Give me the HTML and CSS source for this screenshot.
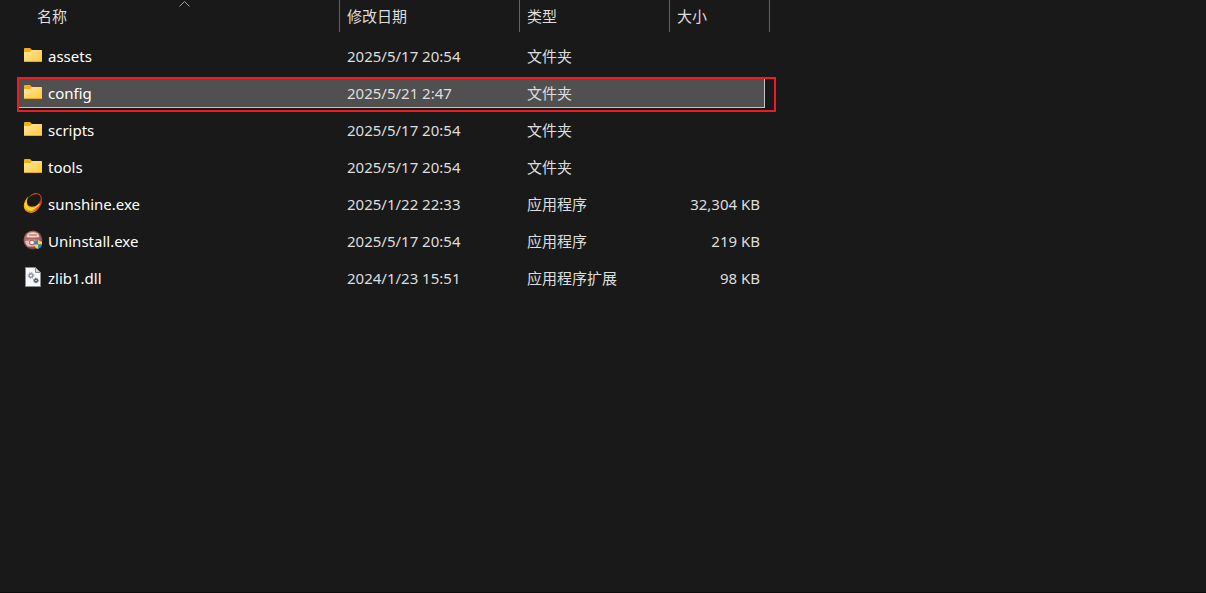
FILE: index.html
```
<!DOCTYPE html>
<html lang="zh-CN">
<head>
    <meta charset="UTF-8">
    <meta name="viewport" content="width=device-width, initial-scale=1.0">
    <title>Sunshine</title>
    <link rel="stylesheet" href="styles.css">
</head>
<body>
    <svg class="sprite" aria-hidden="true">
        <defs>
            <linearGradient id="folder-front" x1="0" y1="0" x2="1" y2="1">
                <stop offset="0" stop-color="#ffe8a0"/>
                <stop offset="1" stop-color="#ffc938"/>
            </linearGradient>
            <linearGradient id="ring" x1="0" y1="0" x2="1" y2="0">
                <stop offset="0" stop-color="#ffae00"/>
                <stop offset="0.45" stop-color="#ffc61a"/>
                <stop offset="0.7" stop-color="#f56a10"/>
                <stop offset="1" stop-color="#b52a12"/>
            </linearGradient>
            <radialGradient id="disc" cx="0.45" cy="0.45" r="0.55">
                <stop offset="0" stop-color="#e3b3a2"/>
                <stop offset="0.6" stop-color="#bb786f"/>
                <stop offset="1" stop-color="#5b3a36"/>
            </radialGradient>
            <symbol id="icon-folder" viewBox="0 0 20 20">
                <path fill="#f5ae14" d="M1 4a1 1 0 0 1 1-1h5l2 2h9a1 1 0 0 1 1 1v10H1z"/>
                <path fill="url(#folder-front)" d="M1 7h6l2-2h9a1 1 0 0 1 1 1v10a1 1 0 0 1-1 1H2a1 1 0 0 1-1-1z"/>
                <path fill="#e9a91d" d="M1 16h18a1 1 0 0 1-1 1H2a1 1 0 0 1-1-1z"/>
            </symbol>
            <symbol id="icon-sunshine" viewBox="0 0 20 20">
                <path fill="url(#ring)" fill-rule="evenodd" d="M13 .3C17 .2 19.400 3 19 7.500C18.500 13.500 13.500 19.700 8 19.700C3.500 19.700 .7 17 .8 12.500C.9 9 3 5.500 5.500 3.500C4 6 3.500 9 4.500 11.500C6 14.500 11 14.500 14.500 11.500C18 8.500 19.200 3.500 15.500 1.600C13 .4 9 1.400 6 4C8 1.600 10.500 .4 13 .3z"/>
                <path fill="none" stroke="#b23314" stroke-width=".8" d="M5 5C8 1.500 13 0 16 1.700C19 3.500 19 7 17.500 10"/>
                <path fill="none" stroke="#ffe25a" stroke-width="1.200" d="M2.500 10C2 14 5 16.500 8.500 16C12 15.500 15 13 16.500 11"/>
                <path fill="none" stroke="#e2500c" stroke-width="1" d="M2.500 16.500C5 19.500 9 19.500 12 17.500C15 15.500 17.500 12 18.500 9"/>
            </symbol>
            <symbol id="icon-uninstall" viewBox="0 0 20 20">
                <circle cx="10" cy="10" r="9.500" fill="url(#disc)"/>
                <path fill="#ecd3c8" d="M5 3.500Q10 1 15 3.500L16.500 7h-13z"/>
                <path fill="#c5524e" d="M6 4.500h8v1H6z"/>
                <path fill="#a8646a" d="M1.500 8h17l.3 1.500H1.200z"/>
                <path fill="#dfc0bb" d="M2 11h9v5.500H4.500Q2.500 14 2 11z"/>
                <circle cx="9" cy="12.500" r="2.400" fill="#fff" stroke="#c4383a" stroke-width="1"/>
                <path fill="#2a86dc" d="M11 11.500q2-.2 4-1.500v4.500h-4z"/>
                <path fill="#ffd331" d="M15 10q2 1.300 4 1.500v3h-4z"/>
                <path fill="#ffd331" d="M11 14.500h4V19q-3.500-1.300-4-4.500z"/>
                <path fill="#2a86dc" d="M15 14.500h4q-.5 3.200-4 4.500z"/>
            </symbol>
            <symbol id="icon-dll" viewBox="0 0 20 20">
                <path fill="#f8f8f8" stroke="#8c8c8c" stroke-width="1" d="M2.500.5h10l5 5v14h-15z"/>
                <path fill="#d6d6d6" stroke="#8c8c8c" stroke-width="1" d="M12.500.5v5h5z"/>
                <circle cx="8" cy="8.500" r="1.800" fill="none" stroke="#8d99a5" stroke-width="1.400"/>
                <circle cx="8" cy="8.500" r="2.900" fill="none" stroke="#8d99a5" stroke-width="1" stroke-dasharray="1.200 1.078"/>
                <circle cx="13" cy="13.500" r="1.400" fill="none" stroke="#3f4d5b" stroke-width="1.200"/>
                <circle cx="13" cy="13.500" r="2.300" fill="none" stroke="#3f4d5b" stroke-width="1" stroke-dasharray="1 .806"/>
            </symbol>
        </defs>
    </svg>

    <main class="explorer">
        <table class="file-table">
            <colgroup>
                <col class="col-name">
                <col class="col-date">
                <col class="col-type">
                <col class="col-size">
            </colgroup>
            <thead>
                <tr>
                    <th aria-sort="ascending">
                        <button class="column-header column-header-name" type="button">名称
                            <svg class="sort-arrow" viewBox="0 0 11 6" aria-hidden="true"><path d="M.5 5.500l5-5 5 5"/></svg>
                        </button>
                    </th>
                    <th><button class="column-header" type="button">修改日期</button></th>
                    <th><button class="column-header" type="button">类型</button></th>
                    <th><button class="column-header" type="button">大小</button></th>
                </tr>
            </thead>
            <tbody>
                <tr>
                    <td><div class="file-name"><svg class="file-icon"><use href="#icon-folder"/></svg>assets</div></td>
                    <td>2025/5/17 20:54</td>
                    <td>文件夹</td>
                    <td class="file-size"></td>
                </tr>
                <tr class="selected">
                    <td><div class="file-name"><svg class="file-icon"><use href="#icon-folder"/></svg>config</div></td>
                    <td>2025/5/21 2:47</td>
                    <td>文件夹</td>
                    <td class="file-size"></td>
                </tr>
                <tr>
                    <td><div class="file-name"><svg class="file-icon"><use href="#icon-folder"/></svg>scripts</div></td>
                    <td>2025/5/17 20:54</td>
                    <td>文件夹</td>
                    <td class="file-size"></td>
                </tr>
                <tr>
                    <td><div class="file-name"><svg class="file-icon"><use href="#icon-folder"/></svg>tools</div></td>
                    <td>2025/5/17 20:54</td>
                    <td>文件夹</td>
                    <td class="file-size"></td>
                </tr>
                <tr>
                    <td><div class="file-name"><svg class="file-icon"><use href="#icon-sunshine"/></svg>sunshine.exe</div></td>
                    <td>2025/1/22 22:33</td>
                    <td>应用程序</td>
                    <td class="file-size">32,304 KB</td>
                </tr>
                <tr>
                    <td><div class="file-name"><svg class="file-icon"><use href="#icon-uninstall"/></svg>Uninstall.exe</div></td>
                    <td>2025/5/17 20:54</td>
                    <td>应用程序</td>
                    <td class="file-size">219 KB</td>
                </tr>
                <tr>
                    <td><div class="file-name"><svg class="file-icon"><use href="#icon-dll"/></svg>zlib1.dll</div></td>
                    <td>2024/1/23 15:51</td>
                    <td>应用程序扩展</td>
                    <td class="file-size">98 KB</td>
                </tr>
            </tbody>
        </table>
    </main>
</body>
</html>
```
FILE: styles.css
```
:root {
    --bg: #191919;
    --text: #dedede;
    --text-name: #ffffff;
    --divider: #636363;
    --selected-bg: #505050;
    --selected-border: #c4c4c4;
    --mark: #ed1c24;
}

* {
    box-sizing: border-box;
    margin: 0;
    padding: 0;
}

body {
    font-family: "Noto Sans", "Noto Sans CJK SC", sans-serif;
    font-size: 15px;
    line-height: 20px;
    background: var(--bg);
    color: var(--text);
}

.sprite {
    position: absolute;
    width: 0;
    height: 0;
}

.explorer {
    min-height: 100vh;
    padding-left: 17px;
    border-bottom: 1px solid #0c0c0c;
}

.file-table {
    width: 100%;
    max-width: 753px;
    table-layout: fixed;
    border-collapse: collapse;
}

.col-name {
    width: 323px;
}

.col-date {
    width: 180px;
}

.col-type {
    width: 150px;
}

.col-size {
    width: 100px;
}

/* column headers */
th {
    height: 38px;
    vertical-align: top;
    font-weight: normal;
}

.column-header {
    position: relative;
    display: block;
    width: 100%;
    height: 32px;
    padding-left: 7px;
    border: none;
    border-right: 1px solid var(--divider);
    background: none;
    color: var(--text);
    font: inherit;
    text-align: left;
}

.column-header-name {
    padding-left: 20px;
}

.sort-arrow {
    position: absolute;
    top: 1px;
    left: 162px;
    width: 11px;
    height: 6px;
    fill: none;
    stroke: #a0a0a0;
}

/* file rows */
td {
    height: 37px;
    padding: 0 0 2px 7px;
    white-space: nowrap;
}

td:first-child {
    padding-left: 6px;
}

.file-name {
    display: flex;
    align-items: center;
    gap: 5px;
    color: var(--text-name);
}

.file-icon {
    width: 20px;
    height: 20px;
    margin-bottom: 1px;
}

td.file-size {
    padding-right: 10px;
    text-align: right;
}

.selected {
    position: relative;
    z-index: 0;
}

.selected td:first-child::before {
    content: "";
    position: absolute;
    z-index: -1;
    top: 3px;
    right: 5px;
    bottom: 4px;
    left: 1px;
    border: 1px solid var(--selected-border);
    background: var(--selected-bg);
}

/* red frame around the folder to open */
.selected td:first-child::after {
    content: "";
    position: absolute;
    top: 2px;
    right: -6px;
    bottom: 0;
    left: 0;
    border: 2px solid var(--mark);
}
```
